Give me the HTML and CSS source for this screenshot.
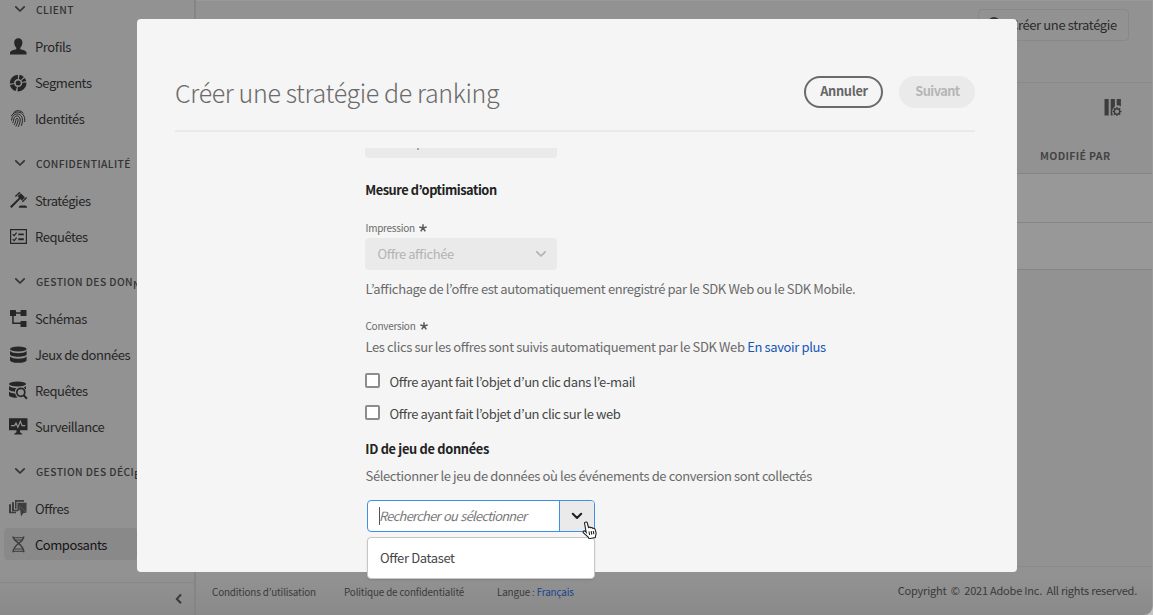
FILE: index.html
```html
<!DOCTYPE html>
<html lang="fr">
<head>
<meta charset="utf-8">
<title>Créer une stratégie de ranking</title>
<link rel="stylesheet" href="styles.css">
</head>
<body>
<div class="app">
  <nav class="sidebar">
    <div class="nav">
      <h3 class="nav-head"><svg class="chev" viewBox="0 0 12 8"><path d="M1.800 1.800 6 6l4.200-4.200"/></svg>CLIENT</h3>
      <a class="nav-item"><svg class="ico" viewBox="0 0 18 18"><path d="M9.300.2C6.700.2 5.200 2 5.200 4.600c0 2 .7 3.700 1.900 4.900.5.7.3 1.700-.6 2C3.300 12.300 1 13 1 15.300v1.300h16.600v-1.300c0-2.300-2.300-3-5.500-3.800-.9-.3-1.100-1.300-.6-2 1.200-1.200 1.900-2.900 1.900-4.900C13.400 2 11.900.2 9.300.2z"/></svg>Profils</a>
      <a class="nav-item"><svg class="ico" viewBox="0 0 18 18"><g fill="none" stroke="currentColor" stroke-width="4.300"><path d="M10.200 2.850A6.200 6.200 0 0 1 13.400 4.500"/><path d="M14.100 5.300A6.200 6.200 0 0 1 15.200 7.500"/><path d="M15.400 8.700A6.200 6.200 0 0 1 8.600 15.200"/><path d="M7.300 15A6.200 6.200 0 0 1 3 10.500"/><path d="M2.900 9.400A6.200 6.200 0 0 1 8.900 2.800"/></g><circle cx="9.200" cy="9" r="2.500"/></svg>Segments</a>
      <a class="nav-item"><svg class="ico line" viewBox="0 0 18 18"><path d="M4.500 2.700C7-.1 12 0 14.300 3.300M2.400 6.200C4 2.600 8 1.300 11 2.500c3.600 1.300 5.400 5 4.600 9.500M2.500 10.500c.5-4.500 2.700-6.600 5.900-6.500 3.600.2 5.500 3.500 4.900 8-.1 1.200-.5 2.500-1 3.800M3.600 13c1.200-2 .8-3.800 1.800-5.600 1.300-2.200 4.500-1.700 5.400.4 1 2.500-.1 6.300-1.700 9M5 15c1.600-2 1.600-4.200 2-5.800.4-1.300 1.900-1 2 .2.200 2-1 5-2.200 7"/></svg>Identités</a>

      <h3 class="nav-head"><svg class="chev" viewBox="0 0 12 8"><path d="M1.800 1.800 6 6l4.200-4.200"/></svg>CONFIDENTIALITÉ</h3>
      <a class="nav-item"><svg class="ico" viewBox="0 0 18 18"><path d="M8.600 4.300 11.800 1.200 15.900 5.200 12.800 8.400 11.300 7 2.600 16 1 14.400 10 5.700z"/><path d="M6.400 4.400 10.900.2M13.300 9.800 17.600 5.600" fill="none" stroke="currentColor" stroke-width="1.400"/><path d="M9.800 15.800c0-1.300.8-2.200 2-2.200h4.200c1.200 0 2 .9 2 2.200z"/></svg>Stratégies</a>
      <a class="nav-item"><svg class="ico line" viewBox="0 0 18 18"><path stroke-width="1.200" d="M1.600 1.600h15.800v13.800H1.600z"/><path stroke-width="1.200" d="m3.700 6.300 1.500 1.300 2.400-3M3.700 11.300l1.500 1.300 2.400-3"/><path stroke-width="1.900" d="M9.300 6.400h5.500M9.300 11.300h5.500"/></svg>Requêtes</a>

      <h3 class="nav-head"><svg class="chev" viewBox="0 0 12 8"><path d="M1.800 1.800 6 6l4.200-4.200"/></svg>GESTION DES DON<span class="drop">N</span></h3>
      <a class="nav-item"><svg class="ico" viewBox="0 0 18 18"><rect x="1" y="0" width="6" height="6" rx=".6"/><rect x="11.500" y="0" width="6" height="6" rx=".6"/><rect x="11.500" y="11" width="6" height="6" rx=".6"/><path d="M5 2.300h8v1.500H5zM3.200 4h1.500v8.500H13V14H3.200z"/></svg>Schémas</a>
      <a class="nav-item"><svg class="ico" viewBox="0 0 18 18"><ellipse cx="9.300" cy="3" rx="8.300" ry="2.600"/><path d="M1 5c1.500 1.700 5 2.200 8.300 2.200s6.800-.5 8.300-2.200v3.300c0 1.500-3.700 2.500-8.300 2.500S1 9.800 1 8.300z"/><path d="M1 10.500c1.500 1.700 5 2.200 8.300 2.200s6.800-.5 8.300-2.200v3.700c0 1.500-3.700 2.600-8.300 2.600S1 15.700 1 14.200z"/></svg>Jeux de données</a>
      <a class="nav-item"><svg class="ico" viewBox="0 0 18 18"><ellipse cx="8.500" cy="2" rx="8.500" ry="2.500"/><path d="M0 4c1.400 1.500 4.500 2 7.500 2.100C6.500 7 6 8.300 6 9.700 3 9.500 0 8.700 0 7.300zM0 9.500c1.400 1.400 3.800 1.900 6.200 2 .3 2 1.300 3.300 2.800 4.100C4.500 16 0 15 0 13.200zM14.500 5.500c1-.3 1.900-.8 2.500-1.500v3.500z"/><circle cx="11.800" cy="10.300" r="4" fill="none" stroke="currentColor" stroke-width="1.700"/><path d="m14.700 13.300 3.200 3.400" stroke="currentColor" stroke-width="2"/></svg>Requêtes</a>
      <a class="nav-item"><svg class="ico" viewBox="0 0 18 18"><path d="M0 .2h18.500v12H11V14c0 1 2.300.7 2.300 2.600H5.200C5.200 14.700 7.500 15 7.500 14v-1.800H0z"/><path d="M2 7.600h3.600L7 5l1.900 4.300 2.500-6 1.700 4.300h3.200" fill="none" stroke="#929292" stroke-width="1.200"/></svg>Surveillance</a>

      <h3 class="nav-head"><svg class="chev" viewBox="0 0 12 8"><path d="M1.800 1.800 6 6l4.200-4.200"/></svg>GESTION DES DÉCI<span class="drop">E</span></h3>
      <a class="nav-item mid"><svg class="ico" viewBox="0 0 18 18"><path d="M0 4.200h2v7.600h5v1.500H0zM3 2.300h2v7.500h4v1.500H3zM6 0h9v1.800H7.500v7H6zM8.500 2.800h9v9.700l-6.800-6.700v4.700H8.500z"/><path d="m10.700 5.800 6.800 7-3 .2-2.500 3.500z"/></svg>Offres</a>
      <a class="nav-item mid active"><svg class="ico line" viewBox="0 0 18 18"><path stroke-width="1.500" d="M4 .5c0 5 10.800 7 10.800 15.800M14.800.5C14.800 6.500 4 8 4 16.300"/><path stroke-width="1" d="M4.500 1.700h10M5.500 4h8M5.500 13h8M4.500 15.300h10"/></svg>Composants</a>
    </div>
    <div class="collapse"><svg viewBox="0 0 8 12"><path d="M6 1.500 1.800 5.900 6 10.300"/></svg></div>
  </nav>

  <main class="main">
    <div class="toolbar"><div class="create"><svg viewBox="0 0 12 12"><circle cx="6" cy="6" r="6"/></svg>Créer une stratégie</div></div>
    <div class="tablehead">
      <svg class="cols" viewBox="0 0 18 18"><path d="M.5 0h4.200v16.500H.5zM6.700 0h4.200v7.500L9.200 9l-1.400 3.500.8 2.500v1.500H6.700zM12.700 0h4.200v7.500l-1.600-1-2.600-.3z"/><circle cx="13" cy="12.500" r="2.700" fill="none" stroke="currentColor" stroke-width="1.400"/><path d="M13 8v1.700M13 15.300V17M8.500 12.500h1.700M15.800 12.500h1.700M9.800 9.300l1.200 1.200M15 14.500l1.200 1.200M16.200 9.300 15 10.500M11 14.500l-1.200 1.200" stroke="currentColor" stroke-width="1.300"/></svg>
      <div class="colname">MODIFIÉ PAR</div>
    </div>
    <div class="row"></div>
    <div class="row last"></div>
    <div class="filler"></div>
    <footer class="footer">
      <span class="cond">Conditions d’utilisation</span>
      <span class="poli">Politique de confidentialité</span>
      <span class="lang">Langue : <a>Français</a></span>
      <span class="copy">Copyright&nbsp; ©&nbsp; 2021 Adobe Inc.&nbsp; All rights reserved.</span>
    </footer>
  </main>
</div>

<section class="modal">
  <header class="modal-head">
    <h1>Créer une stratégie de ranking</h1>
    <button class="btn">Annuler</button>
    <button class="btn disabled">Suivant</button>
  </header>
  <div class="form">
    <div class="stub"></div>
    <h2 class="tight">Mesure d’optimisation</h2>
    <div class="label">Impression <svg class="ast" viewBox="0 0 8 8"><path d="M4 4V.2M4 4 .3 3M4 4l3.700-1M4 4 1.700 7.400M4 4l2.300 3.400"/></svg></div>
    <div class="select">Offre affichée<svg class="chev" viewBox="0 0 12 8"><path d="M1.800 1.800 6 6l4.200-4.200"/></svg></div>
    <p class="after-select">L’affichage de l’offre est automatiquement enregistré par le SDK Web ou le SDK Mobile.</p>
    <div class="label second">Conversion <svg class="ast" viewBox="0 0 8 8"><path d="M4 4V.2M4 4 .3 3M4 4l3.700-1M4 4 1.700 7.400M4 4l2.300 3.400"/></svg></div>
    <p class="after-label">Les clics sur les offres sont suivis automatiquement par le SDK Web <a>En savoir plus</a></p>
    <div class="checks">
      <label class="check"><i class="box"></i>Offre ayant fait l’objet d’un clic dans l’e-mail</label>
      <label class="check"><i class="box"></i>Offre ayant fait l’objet d’un clic sur le web</label>
    </div>
    <h2 class="dataset">ID de jeu de données</h2>
    <p class="after-h">Sélectionner le jeu de données où les événements de conversion sont collectés</p>
    <div class="combo">
      <div class="field"><i class="caret"></i><em>Rechercher ou sélectionner</em></div>
      <div class="trigger"><svg class="chev" viewBox="0 0 12 8"><path d="M1.800 1.800 6 6l4.200-4.200"/></svg></div>
      <div class="menu">Offer Dataset</div>
      <svg class="cursor" viewBox="0 0 15 18"><path d="M3.400 1.100C4.300.7 5 1.200 5.300 2l1.200 4.500c.7-.6 1.700-.4 2.200.3.800-.5 1.800-.2 2.200.6.900-.4 1.900.1 2.200 1l.9 3.300c.2 1-.1 2-.4 3l-.3 1.900-6.300 1.100-.8-1.700L1.500 12C.9 11.100 1 10.300 1.700 10c.6-.3 1.300 0 1.700.5l.8.9L2.600 2.600c-.2-.7.100-1.300.8-1.500z"/><path d="m7 10.500.6 3.500M9.200 10.200l.6 3.500M11.300 10l.5 3.200"/></svg>
    </div>
  </div>
</section>
</body>
</html>
```
FILE: styles.css
```css
* { box-sizing: border-box; }
body {
  margin: 0;
  width: 1153px;
  height: 615px;
  overflow: hidden;
  position: relative;
  background: #c4c4c4;
  color: #2b2b2b;
  font-family: "Noto Sans CJK JP", "Open Sans", sans-serif;
  font-size: 13px;
  letter-spacing: -0.37px;
  font-feature-settings: "liga" 1;
}
h1, h2, h3, p { margin: 0; }
svg { display: block; flex: none; }

.app { display: flex; height: 615px; background: linear-gradient(#929292 575px, #8a8a8a 615px); border-radius: 0 0 9px 0; border-right: 1px solid #9a9a9a; overflow: hidden; }
.sidebar { width: 196px; border-right: 2px solid #858585; display: flex; flex-direction: column; }
.nav { height: 582px; overflow: hidden; }
.nav-head {
  display: flex; align-items: center; height: 46px; padding: 8px 0 0 14px;
  font-size: 10.3px; font-weight: 500; letter-spacing: .4px; white-space: nowrap; color: #333;
}
.nav-head:first-child { margin-top: -18px; }
.nav-head .chev { margin-right: 10px; }
.drop { position: relative; top: 3px; }
.chev { width: 12px; height: 8px; fill: none; stroke: currentColor; stroke-width: 1.7; stroke-linecap: round; stroke-linejoin: round; }
.nav-item { display: flex; align-items: center; height: 36px; padding-left: 5px; margin-left: 4px; width: 133px; border-radius: 4px; color: #262626; letter-spacing: -.45px; white-space: nowrap; }
.ico { width: 18px; height: 18px; margin: 2px 8px 0 0; fill: currentColor; overflow: visible; }
.line { fill: none; stroke: currentColor; stroke-width: 1; }
.mid .ico { color: #3d3d3d; }
.active { height: 32px; margin-top: 2px; background: #898989; color: #141414; }
.collapse { flex: 1; border-top: 1px solid #888; padding: 10px 0 0 175px; }
.collapse svg { width: 8px; height: 12px; fill: none; stroke: #3a3a3a; stroke-width: 2; }

.main { flex: 1; display: flex; flex-direction: column; border-top: 1px solid #9b9b96; }
.toolbar { height: 82px; border-bottom: 1px solid #898989; padding: 8px 23px 0 0; display: flex; justify-content: flex-end; align-items: flex-start; }
.create { width: 151px; height: 32px; border: 1px solid #888; border-radius: 4px; display: flex; align-items: center; padding: 0 0 2px 9px; gap: 10px; white-space: nowrap; }
.create svg { width: 12px; height: 12px; fill: #333; margin-top: -2px; }
.tablehead { height: 91px; border-bottom: 1px solid #858585; }
.cols { width: 18px; height: 18px; margin: 16px 0 0 908px; fill: #3d3d3d; color: #3d3d3d; }
.colname { margin: 31px 0 0 844px; height: 16px; line-height: 16px; font-size: 10.5px; font-weight: 700; letter-spacing: .33px; color: #444; }
.row { height: 49px; background: #989898; border-bottom: 1px solid #858585; }
.last { height: 47px; }
.filler { flex: 1; }
.footer { height: 49px; border-top: 1px solid #8a8a8a; display: flex; align-items: center; padding: 1px 15px 0 16px; font-size: 9.9px; letter-spacing: -.16px; color: #3a3a3a; white-space: nowrap; }
.cond { width: 132px; }
.poli { width: 153px; }
.lang { flex: 1; }
.footer a { color: #17418c; }
.copy { font-size: 11px; letter-spacing: -.22px; margin-top: -3px; }

.modal { position: absolute; left: 137px; top: 19px; width: 880px; height: 553px; background: #f5f5f5; border-radius: 4px; padding: 0 42px 0 38px; }
.modal-head { height: 113px; border-bottom: 2px solid #eaeaea; display: flex; align-items: center; padding-top: 34px; }
h1 { flex: 1; font-size: 25px; line-height: 32px; font-weight: 300; letter-spacing: -.36px; color: #6a6a6a; }
.btn { width: 79px; height: 32px; border-radius: 16px; border: 2px solid #6a6a6a; background: none; padding: 0 0 2px 1px; font: 700 12.8px/20px "Noto Sans CJK JP", sans-serif; letter-spacing: -.3px; color: #666; }
.disabled { width: 76px; margin-left: 16px; background: #eaeaea; border-color: #eaeaea; color: #b6b6b6; letter-spacing: -.55px; }

.form { padding: 16px 0 0 190px; color: #6a6a6a; }
.stub { width: 192px; height: 10px; background: linear-gradient(#aaa, #aaa) 52px 0 / 2px 2px no-repeat #eaeaea; border-radius: 0 0 4px 4px; }
h2 { height: 20px; line-height: 20px; font-size: 12.8px; font-weight: 700; letter-spacing: -.3px; color: #222; padding-left: .3px; }
.tight { margin-top: 22px; letter-spacing: -.46px; }
.label { display: flex; align-items: center; height: 16px; margin-top: 20px; padding: 0 0 2px .5px; font-size: 10px; letter-spacing: -.27px; }
.ast { width: 8px; height: 8px; margin: 2px 0 0 4.5px; stroke: #5a5a5a; stroke-width: 1.5; }
.select { width: 192px; height: 32px; margin-top: 2px; background: #eaeaea; border-radius: 4px; padding: 0 10px 1px 12.5px; display: flex; align-items: center; justify-content: space-between; letter-spacing: -.46px; color: #b3b3b3; }
.select .chev { margin-top: 1px; }
p { height: 20px; line-height: 20px; padding-left: .5px; white-space: nowrap; }
p a { color: #1556b8; }
.after-select { margin-top: 9px; }
.second { margin-top: 19px; }
.after-label { margin-top: 3px; }
.checks { margin-top: 8px; }
.check { display: flex; align-items: center; height: 32px; color: #464646; letter-spacing: -.4px; }
.box { width: 15px; height: 15px; margin: -2px 9.5px 0 0; border: 2px solid #8c8c8c; border-radius: 2px; background: #fff; }
.dataset { margin-top: 10px; }
.after-h { margin-top: 7px; }
.combo { position: relative; display: flex; width: 228px; height: 32px; margin: 14px 0 0 2px; border: 1px solid #3f8fe8; border-radius: 4px; background: #fff; }
.field { width: 191px; display: flex; align-items: center; padding-left: 11px; font-size: 12.8px; letter-spacing: -.68px; color: #777; white-space: nowrap; }
.field em { margin-left: -1px; padding-bottom: 1px; word-spacing: 1px; }
.caret { width: 1px; height: 18px; background: #555; }
.trigger { flex: 1; border-left: 1px solid #3f8fe8; background: #eaeaea; border-radius: 0 3px 3px 0; display: flex; align-items: center; padding-left: 11px; color: #222; }
.trigger .chev { stroke-width: 2.1; }
.menu { position: absolute; left: -1px; top: 36px; width: 228px; height: 42px; border: 1px solid #c6c6c6; border-radius: 4px; background: #fff; padding-left: 12px; line-height: 40px; color: #464646; box-shadow: 0 1px 2px rgba(0, 0, 0, .12); }
.cursor { position: absolute; left: 214px; top: 20px; width: 15px; height: 18px; fill: #fff; stroke: #222; stroke-width: 1.1; }
```
